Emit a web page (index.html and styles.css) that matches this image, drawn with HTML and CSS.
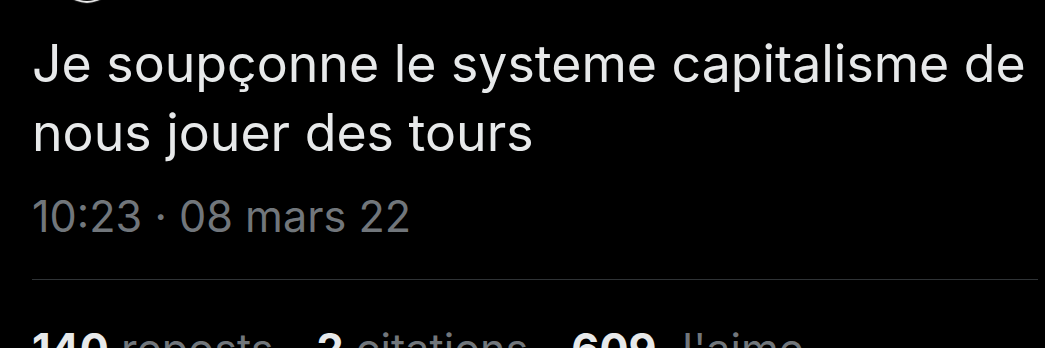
FILE: index.html
```html
<!DOCTYPE html>
<html>
<head>
	<meta name="viewport" content="width=device-width, initial-scale=1">
	<title>Post</title>
	<link rel="stylesheet" href="styles.css">
</head>
<body>

<div class="post">
	<div class="post-head">
		<span class="avatar"></span>
	</div>

	<div class="post-text">Je soupçonne le systeme capitalisme de nous jouer des tours</div>

	<div class="post-date">10:23 · 08 mars 22</div>

	<div class="post-stats">
		<span class="stat"><b>140</b> reposts</span>
		<span class="stat"><b>2</b> citations</span>
		<span class="stat"><b>609</b> J'aime</span>
	</div>
</div>

</body>
</html>
```

FILE: styles.css
```css
* {
	box-sizing: border-box;
}

html, body {
	margin: 0;
	height: 100%;
	background: black;
	overflow: hidden;
}

body {
	font-family: Inter, "Noto Sans", sans-serif;
	color: #e7e9ea;
}

.post {
	padding: 0 7px 0 32px;
}

/* Only the lower rim of the avatar is on screen */
.post-head {
	display: flow-root;
	height: 29px;
}

.avatar {
	display: block;
	width: 56px;
	height: 56px;
	margin: -55px 0 0 27px;
	border-radius: 50%;
	background: #111;
	box-shadow: 0 2px 1px #f4f4f4;
}

.post-text {
	font-size: 51.8px;
	line-height: 69px;
}

.post-date {
	margin-top: 21px;
	font-size: 43.2px;
	line-height: 56px;
	color: #71767b;
	padding-bottom: 35px;
	border-bottom: 1px solid #2f3336;
}

.post-stats {
	display: flex;
	gap: 43px;
	padding-top: 41px;
	font-size: 43.2px;
	line-height: 56px;
	color: #71767b;
}

.post-stats b {
	color: #e7e9ea;
	font-weight: 700;
}
```
